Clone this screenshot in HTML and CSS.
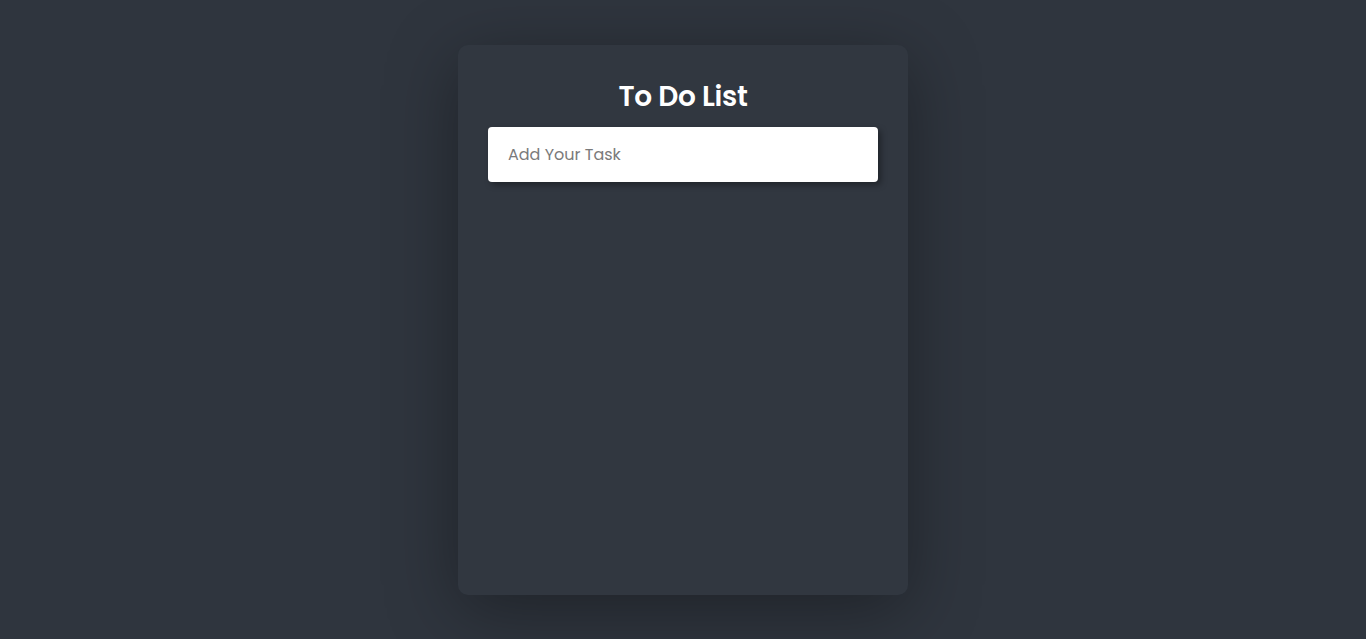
FILE: index.html
```html
<!DOCTYPE html>
<html lang="en">
<head>
<meta charset="utf-8">
<title>To Do List</title>
<link rel="stylesheet" href="styles.css">
</head>
<body>
  <div class="card">
    <h1 class="title">To Do List</h1>
    <input class="task-input" type="text" placeholder="Add Your Task">
    <ul class="task-list"></ul>
  </div>
</body>
</html>
```

FILE: styles.css
```css
* { box-sizing: border-box; }
html, body { margin: 0; padding: 0; }
body {
  background: #2f353e;
  min-height: 100vh;
  font-family: "Poppins", Inter, "Noto Sans", sans-serif;
  overflow: hidden;
}
.card {
  width: 450px;
  height: 550px;
  margin: 45px auto 0;
  padding: 30px;
  background: #313740;
  border-radius: 10px;
  box-shadow: 0 15px 70px rgba(0, 0, 0, 0.35);
  display: flex;
  flex-direction: column;
}
.title {
  margin: 0 0 12px;
  height: 40px;
  line-height: 44px;
  text-align: center;
  color: #ffffff;
  font-size: 28px;
  font-weight: 600;
  letter-spacing: -0.3px;
}
.task-input {
  width: 100%;
  height: 55px;
  border: none;
  outline: none;
  border-radius: 4px;
  background: #ffffff;
  padding: 0 20px;
  font-family: inherit;
  font-size: 16px;
  color: #333;
  box-shadow: 3px 3px 6px rgba(0, 0, 0, 0.35);
}
.task-input::placeholder { color: #7a7a7a; }
.task-list { list-style: none; margin: 0; padding: 0; }
```
